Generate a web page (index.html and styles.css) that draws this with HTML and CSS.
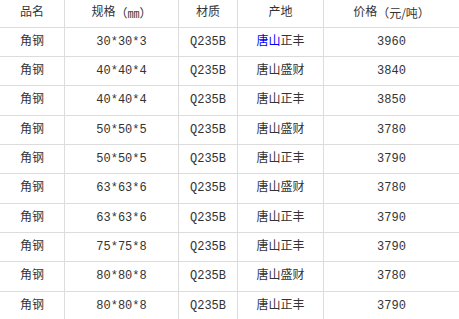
FILE: index.html
```html
<!DOCTYPE html>
<html lang="zh-CN">
<head>
<meta charset="utf-8">
<link rel="stylesheet" href="styles.css">
</head>
<body>
<div class="tbl">
  <div class="row head"><div class="c">品名</div><div class="c">规格<span class="cjk">（㎜）</span></div><div class="c">材质</div><div class="c">产地</div><div class="c">价格<span class="cjk">（元/吨）</span></div></div>
  <div class="row"><div class="c">角钢</div><div class="c">30*30*3</div><div class="c">Q235B</div><div class="c"><span class="link">唐山</span>正丰</div><div class="c">3960</div></div>
  <div class="row"><div class="c">角钢</div><div class="c">40*40*4</div><div class="c">Q235B</div><div class="c">唐山盛财</div><div class="c">3840</div></div>
  <div class="row"><div class="c">角钢</div><div class="c">40*40*4</div><div class="c">Q235B</div><div class="c">唐山正丰</div><div class="c">3850</div></div>
  <div class="row"><div class="c">角钢</div><div class="c">50*50*5</div><div class="c">Q235B</div><div class="c">唐山盛财</div><div class="c">3780</div></div>
  <div class="row"><div class="c">角钢</div><div class="c">50*50*5</div><div class="c">Q235B</div><div class="c">唐山正丰</div><div class="c">3790</div></div>
  <div class="row"><div class="c">角钢</div><div class="c">63*63*6</div><div class="c">Q235B</div><div class="c">唐山盛财</div><div class="c">3780</div></div>
  <div class="row"><div class="c">角钢</div><div class="c">63*63*6</div><div class="c">Q235B</div><div class="c">唐山正丰</div><div class="c">3790</div></div>
  <div class="row"><div class="c">角钢</div><div class="c">75*75*8</div><div class="c">Q235B</div><div class="c">唐山正丰</div><div class="c">3790</div></div>
  <div class="row"><div class="c">角钢</div><div class="c">80*80*8</div><div class="c">Q235B</div><div class="c">唐山盛财</div><div class="c">3780</div></div>
  <div class="row"><div class="c">角钢</div><div class="c">80*80*8</div><div class="c">Q235B</div><div class="c">唐山正丰</div><div class="c">3790</div></div>
</div>
</body>
</html>
```
FILE: styles.css
```css
html, body {
  margin: 0;
  padding: 0;
  background: #fff;
  overflow: hidden;
}
.tbl {
  width: 459px;
  font-family: "Liberation Mono", "Noto Sans CJK SC", monospace;
  font-size: 12px;
  color: #333;
}
.row {
  display: grid;
  grid-template-columns: 64px 114px 59px 86px 1fr;
  height: 29.333px;
  box-sizing: border-box;
  border-bottom: 1px solid #dcdcdc;
}
.row.head {
  height: 27.667px;
}
.c {
  display: flex;
  align-items: center;
  justify-content: center;
  box-sizing: border-box;
  border-left: 1px solid #dcdcdc;
  white-space: nowrap;
  line-height: 1;
}
.c:first-child {
  border-left: none;
}
.cjk {
  font-family: "Noto Sans CJK SC", sans-serif;
}
.link {
  color: #0000ff;
}
```
